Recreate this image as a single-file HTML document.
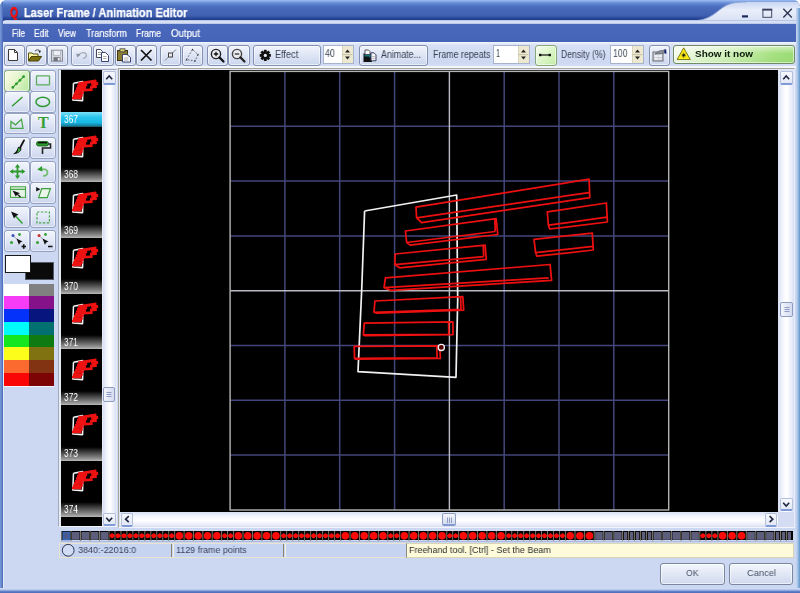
<!DOCTYPE html><html><head><meta charset="utf-8"><title>Laser Frame / Animation Editor</title><style>
*{box-sizing:border-box;margin:0;padding:0}
html,body{width:800px;height:593px;overflow:hidden;background:#fff}
body{font-family:"Liberation Sans",sans-serif;font-size:11px;color:#222;position:relative}
.abs{position:absolute}
.tx{position:absolute;white-space:nowrap;line-height:1;transform-origin:0 0;display:block;will-change:transform}
#win{position:absolute;left:0;top:0;width:800px;height:593px;background:#ccd8f1;border-radius:7px 7px 0 0;overflow:hidden}
#title{position:absolute;left:0;top:0;width:800px;height:21px;background:linear-gradient(#88aae8 0,#789cde 2px,#5d82ce 4px,#4b6dbd 7px,#4464b5 12px,#3f5eb0 16px,#2b4999 18px,#213e8e 19.6px,#2f4e9e 20.5px)}
#ttext{position:absolute;left:24px;top:3px;font-weight:bold;font-size:12.5px;color:#fff;letter-spacing:0.1px;white-space:nowrap}
#tq{position:absolute;left:9px;top:3px;font-weight:bold;font-size:13px;color:#f01010;font-family:"Liberation Mono",monospace}
#lline{position:absolute;left:3.4px;top:20.3px;width:792.4px;height:3.8px;background:linear-gradient(#a9badf,#dbe3f6 40%,#d3dcf3 75%,#a8b8e0);border-radius:3px 0 0 0}
#menu{position:absolute;left:3.4px;top:24.1px;width:792.4px;height:17.6px;background:linear-gradient(#4a69bd,#4563b7)}
#menu span{position:absolute;top:2px;color:#fff;font-size:11px;white-space:nowrap}
#lb{position:absolute;left:0;top:0;width:3.4px;height:593px;background:linear-gradient(90deg,#7999d8,#6283ca 60%,#4565b6 100%)}
#lbw{position:absolute;left:3.2px;top:42px;width:0.9px;height:546px;background:#e4eaf8}
#rb{position:absolute;left:796px;top:8px;width:4px;height:585px;background:linear-gradient(90deg,#c9d8f1,#a4c0e6 45%,#5c96c8)}
#bb{position:absolute;left:0;top:588px;width:800px;height:5px;background:linear-gradient(#dbe4f6,#a9bde6 40%,#5f80c8 70%,#4a68b8)}
#tbar{position:absolute;left:4px;top:42px;width:792px;height:27px;background:linear-gradient(#f4f7fd,#d7e0f4 3px,#cdd8f1 20px,#d4def3 23.5px,#f3f6fc 24.5px,#f3f6fc 25.8px,#cfd9f0 27px)}
.tb{position:absolute;top:44.5px;height:21px;border:1px solid #8390b0;border-radius:3px;background:linear-gradient(#f1f4fb,#dfe6f5 45%,#cbd6ee);box-shadow:inset 0 0 0 1px rgba(255,255,255,.55)}
.tb.g{background:linear-gradient(135deg,#f6fcf0,#def6cc 45%,#c2eca4);border-color:#86a878}
.tb.g2{background:linear-gradient(rgba(255,255,255,.55),rgba(255,255,255,0) 45%,rgba(120,190,90,.12)),linear-gradient(90deg,#f4fbec,#d6f2c0 40%,#a4e07e 85%,#9cdc76);border-color:#6f8c64}
.tbt{position:absolute;white-space:nowrap;font-size:11px;color:#303848}
.spin{position:absolute;top:45.3px;height:19px;background:#fff;border:1px solid #a8b4cc}
.spin i{position:absolute;right:0;top:0;width:11px;height:100%;background:#ece9d0;border-left:1px solid #d8d4bc}
.spin b{position:absolute;left:2px;top:1px;font-weight:normal;font-size:11.5px;color:#505868}
.tool{position:absolute;width:26.4px;height:21.8px;border:1px solid #95a1c0;border-radius:3px;background:linear-gradient(#f2f5fc,#e2e8f6 45%,#ccd6ee);box-shadow:inset 0 0 0 1px rgba(255,255,255,.5)}
.tool.sel{background:linear-gradient(rgba(255,255,255,.35),rgba(255,255,255,0) 50%,rgba(100,180,80,.1)),linear-gradient(90deg,#f7f9de,#e4f5c8 45%,#c2eda8);border-color:#8eb082 #6a9a62 #5c9058 #8eb082}
.sw{position:absolute}
#list{position:absolute;left:61px;top:70.3px;width:41.2px;height:455.7px;background:#000;overflow:hidden}
.lbl{position:absolute;left:0;width:41.5px;height:14.3px;color:#fff;font-size:11px;line-height:13px;padding-left:2px;background:linear-gradient(#000,#2c2c2c 25%,#8c8c8c 80%,#b8b8b8)}
.lbl.sel{background:linear-gradient(#7fe0f8,#28c4ec 35%,#18b8e4 70%,#167f9c 92%,#2a4a54)}
.vtrack{background:linear-gradient(90deg,#d9e0f4,#f4f6fd 30%,#ffffff 55%,#e9edf9 85%,#d6def3)}
.htrack{background:linear-gradient(#d9e0f4,#f4f6fd 30%,#ffffff 55%,#e9edf9 85%,#d6def3)}
.sbb{position:absolute;border:1px solid #b4bfdc;border-bottom:2px solid #7f9bd6;border-radius:2px;background:linear-gradient(#f6f8fd,#e3e8f6)}
.thumb{position:absolute;border:1px solid #8e9cc0;border-radius:2px;background:linear-gradient(90deg,#f3f5fc,#d5dcf0)}
#canvas{position:absolute;left:119.6px;top:70px;width:658.4px;height:441.5px;background:#000}
#strip{position:absolute;left:61px;top:530.5px;width:732px;height:9.7px;background:#000}
#status{position:absolute;left:59px;top:543px;width:735px;height:15px;background:#c6d3f1;border:1px solid #e9e2cc;border-right:none}
.st{position:absolute;top:543px;height:15px;font-size:11px;line-height:14px;color:#3a4258;white-space:nowrap}
.btn{position:absolute;top:562.8px;height:21.8px;border:1px solid #7c869c;border-radius:3px;background:linear-gradient(#f3f6fc,#e1e7f5 50%,#cfd8ee);font-size:11px;color:#4a5268;text-align:center;line-height:20px;box-shadow:inset 0 0 0 1px rgba(255,255,255,.6)}
</style></head><body><div id="win">
<div id="title"></div>
<svg class="abs" style="left:690px;top:0" width="110" height="25" viewBox="0 0 110 25"><defs><linearGradient id="lg1" x1="0" y1="0" x2="0" y2="1"><stop offset="0" stop-color="#c9d6f0"/><stop offset="0.35" stop-color="#e9eefa"/><stop offset="1" stop-color="#d2dcf2"/></linearGradient></defs><path d="M0 25 L0 21 C18 21 24 14 32 8 C40 2.5 46 2 56 2 L110 2 L110 25 Z" fill="url(#lg1)"/><path d="M0 21 C18 21 24 14 32 8 C40 2.5 46 2 56 2" fill="none" stroke="#8fa4d6" stroke-width="1"/><rect x="0" y="0" width="110" height="2" fill="#8fb0e6"/><rect x="52" y="15.3" width="6" height="2.2" fill="#1c2a5a"/><rect x="72.9" y="9.3" width="8.8" height="8" fill="none" stroke="#39425f" stroke-width="0.95"/><rect x="72.4" y="8.8" width="9.8" height="1.8" fill="#39425f"/><path d="M93.3 8.8 L101.8 17.5 M101.8 8.8 L93.3 17.5" stroke="#2c3555" stroke-width="1.35" fill="none"/></svg>
<span class="tx" style="left:24.00px;top:6.68px;font-size:12.43px;color:#fff;font-weight:bold;transform:scaleX(0.8888);-webkit-text-stroke:0.25px #fff;">Laser Frame / Animation Editor</span>
<span class="tx" style="left:9.6px;top:5.3px;font-size:14px;font-weight:bold;color:#f41414;transform:scaleX(0.72);-webkit-text-stroke:0.5px #f41414;text-shadow:0.6px 0.8px 0 #7a1030">Q</span>
<div id="lline"></div>
<div id="menu">
</div>
<span class="tx" style="left:12.00px;top:28.97px;font-size:10.20px;color:#fff;transform:scaleX(0.7913);-webkit-text-stroke:0.2px #fff;">File</span>
<span class="tx" style="left:34.00px;top:28.97px;font-size:10.20px;color:#fff;transform:scaleX(0.8253);-webkit-text-stroke:0.2px #fff;">Edit</span>
<span class="tx" style="left:58.00px;top:28.97px;font-size:10.20px;color:#fff;transform:scaleX(0.8213);-webkit-text-stroke:0.2px #fff;">View</span>
<span class="tx" style="left:85.50px;top:28.97px;font-size:10.20px;color:#fff;transform:scaleX(0.8898);-webkit-text-stroke:0.2px #fff;">Transform</span>
<span class="tx" style="left:136.00px;top:28.97px;font-size:10.20px;color:#fff;transform:scaleX(0.8487);-webkit-text-stroke:0.2px #fff;">Frame</span>
<span class="tx" style="left:170.50px;top:28.97px;font-size:10.20px;color:#fff;transform:scaleX(0.9475);-webkit-text-stroke:0.2px #fff;">Output</span>
<div id="tbar"></div>
<div class="tb " style="left:4.3px;width:21.2px"><svg class="abs" style="left:0;top:0;left:-1.2px;top:-0.8px" width="20" height="20" viewBox="0 0 20 20"><path d="M4.5 4.5 H10.5 L13.5 7.5 V15.5 H4.5 Z" fill="#fff" stroke="#3c3c34" stroke-width="1"/><path d="M10.5 4.5 V7.5 H13.5" fill="none" stroke="#3c3c34" stroke-width="1"/></svg></div>
<div class="tb " style="left:25.5px;width:21.2px"><svg class="abs" style="left:0;top:0;left:-1.2px;top:-0.8px" width="20" height="20" viewBox="0 0 20 20"><path d="M3.5 16 V8 H7 L8 9 H13 V11.5 H6.5 Z" fill="#f8f2a4" stroke="#5c5410" stroke-width="1"/><path d="M3.5 16 L6.3 11.5 H16.6 L13.4 16 Z" fill="#7a7010" stroke="#4a4408" stroke-width="1"/><path d="M10 6.2 C11.5 4.3 13.6 4.5 14.6 6" fill="none" stroke="#444" stroke-width="1"/><path d="M13.2 5.6 L16 5.8 L14.8 8.2 Z" fill="#222"/></svg></div>
<div class="tb " style="left:46.8px;width:21.2px"><svg class="abs" style="left:0;top:0;left:-1.2px;top:-0.8px" width="20" height="20" viewBox="0 0 20 20"><rect x="4.5" y="5.2" width="11" height="11" fill="#d4d7de" stroke="#8a8e98" stroke-width="1"/><rect x="6.5" y="5.7" width="7" height="4.5" fill="#eef0f5" stroke="#9a9ea8" stroke-width=".6"/><rect x="6.5" y="12.2" width="7" height="4" fill="#70747e"/><rect x="10.8" y="13" width="2" height="2.6" fill="#e4e6ec"/></svg></div>
<div class="tb " style="left:71.3px;width:21.2px"><svg class="abs" style="left:0;top:0;left:-1.2px;top:-0.8px" width="20" height="20" viewBox="0 0 20 20"><path d="M7.6 10.6 C8.6 7.4 14 6.6 15.3 9.4 C16.1 11.6 14.2 13.3 12 13.4" fill="none" stroke="#a0a4b0" stroke-width="1.2"/><path d="M5.2 8.6 L9.4 9.4 L6.4 12.6 Z" fill="#8c909c"/></svg></div>
<div class="tb " style="left:93px;width:21.2px"><svg class="abs" style="left:0;top:0;left:-1.2px;top:-0.8px" width="20" height="20" viewBox="0 0 20 20"><path d="M3.5 4.5 H7.5 L9.5 6.5 V12.5 H3.5 Z" fill="#fff" stroke="#444a5c" stroke-width="1"/><path d="M5 7.5H8M5 9.5H8" stroke="#888" stroke-width=".8"/><path d="M8.5 7.5 H12.5 L15.5 10.5 V16.5 H8.5 Z" fill="#fff" stroke="#3a4470" stroke-width="1"/><path d="M10 11.5H13.5M10 13.5H13.5" stroke="#999" stroke-width=".8"/></svg></div>
<div class="tb " style="left:114.6px;width:21.2px"><svg class="abs" style="left:0;top:0;left:-1.2px;top:-0.8px" width="20" height="20" viewBox="0 0 20 20"><rect x="3.5" y="5.5" width="10" height="10" fill="#8a7c30" stroke="#3c3810" stroke-width="1"/><rect x="6" y="3.8" width="5" height="3" fill="#d8d070" stroke="#444" stroke-width=".8"/><path d="M8.5 9.5 H13 L16.5 12.5 V17 H8.5 Z" fill="#fff" stroke="#3a4470" stroke-width="1"/><path d="M10 13H14.5M10 15H14.5" stroke="#999" stroke-width=".8"/></svg></div>
<div class="tb " style="left:136.3px;width:21.2px"><svg class="abs" style="left:0;top:0;left:-1.2px;top:-0.8px" width="20" height="20" viewBox="0 0 20 20"><path d="M5 5 L15.5 15.5 M15.5 5 L5 15.5" stroke="#111" stroke-width="1.7" fill="none"/></svg></div>
<div class="tb " style="left:160.3px;width:21.2px"><svg class="abs" style="left:0;top:0;left:-1.2px;top:-0.8px" width="20" height="20" viewBox="0 0 20 20"><path d="M5 15.5 L16 4.5" stroke="#7a7e88" stroke-width="1" fill="none"/><rect x="8.5" y="8" width="4" height="4" fill="#e8e8e8" stroke="#444" stroke-width="1"/></svg></div>
<div class="tb " style="left:182px;width:21.2px"><svg class="abs" style="left:0;top:0;left:-1.2px;top:-0.8px" width="20" height="20" viewBox="0 0 20 20"><path d="M4.5 14.5 L10.5 4.5 L16 9.5 L13 16 Z" fill="none" stroke="#555" stroke-width=".9" stroke-dasharray="1.6 1.6"/><path d="M10.5 3.5l1 1.8h-2zM3.5 15.5l1-1.8 1 1.8zM16 8.5l1 1.8h-2zM12 16.5l1-1.8 1 1.8z" fill="#333"/></svg></div>
<div class="tb " style="left:206.8px;width:21.2px"><svg class="abs" style="left:0;top:0;left:-1.2px;top:-0.8px" width="20" height="20" viewBox="0 0 20 20"><circle cx="9" cy="9" r="4.6" fill="#eef0f6" stroke="#222" stroke-width="1.4"/><path d="M6.8 9H11.2M9 6.8V11.2" stroke="#111" stroke-width="1.3"/><path d="M12.4 12.4 L16.5 16.5" stroke="#111" stroke-width="2.2" stroke-linecap="round"/></svg></div>
<div class="tb " style="left:228.4px;width:21.2px"><svg class="abs" style="left:0;top:0;left:-1.2px;top:-0.8px" width="20" height="20" viewBox="0 0 20 20"><circle cx="9" cy="9" r="4.6" fill="#e8eaf0" stroke="#444" stroke-width="1.4"/><path d="M6.8 9H11.2" stroke="#333" stroke-width="1.3"/><path d="M12.4 12.4 L16.5 16.5" stroke="#222" stroke-width="2.2" stroke-linecap="round"/></svg></div>
<div class="tb " style="left:253px;width:67.5px"><svg class="abs" style="left:0;top:0;left:2px;top:0" width="22" height="20" viewBox="0 0 22 20"><g transform="translate(9.3,9.4)"><circle r="3.9" fill="#111"/><rect x="-1.4" y="-5.6" width="2.8" height="3" fill="#111" transform="rotate(0)"/><rect x="-1.4" y="-5.6" width="2.8" height="3" fill="#111" transform="rotate(45)"/><rect x="-1.4" y="-5.6" width="2.8" height="3" fill="#111" transform="rotate(90)"/><rect x="-1.4" y="-5.6" width="2.8" height="3" fill="#111" transform="rotate(135)"/><rect x="-1.4" y="-5.6" width="2.8" height="3" fill="#111" transform="rotate(180)"/><rect x="-1.4" y="-5.6" width="2.8" height="3" fill="#111" transform="rotate(225)"/><rect x="-1.4" y="-5.6" width="2.8" height="3" fill="#111" transform="rotate(270)"/><rect x="-1.4" y="-5.6" width="2.8" height="3" fill="#111" transform="rotate(315)"/><circle r="1.6" fill="#e4e9f6"/></g></svg></div>
<span class="tx" style="left:274.80px;top:50.39px;font-size:10.06px;color:#3a4258;transform:scaleX(0.9088);">Effect</span>
<span class="tx" style="left:325.00px;top:49.13px;font-size:10.47px;color:#3e4658;transform:scaleX(0.8411);z-index:3;">40</span>
<div class="spin" style="left:322.8px;width:31.4px"><i></i><svg class="abs" style="right:0;top:0" width="11" height="17" viewBox="0 0 11 17"><path d="M3 6.6 L5.5 3.6 L8 6.6Z M3 10.6 L5.5 13.6 L8 10.6Z" fill="#222"/><path d="M0.5 8.6H10.5" stroke="#c4c0a4" stroke-width="1"/></svg></div>
<div class="tb " style="left:359.2px;width:68.5px"><svg class="abs" style="left:0;top:0;left:0.8px;top:-0.2px" width="20" height="20" viewBox="0 0 20 20"><rect x="3" y="9" width="7.5" height="7.5" fill="#0e7a80" stroke="#111" stroke-width="1"/><path d="M3 11.5 H8 V16.5 H3Z" fill="#111"/><path d="M3 16.5 L10.5 11 V16.5Z" fill="#111"/><path d="M4 5 H7.5 L9 6.5 V9.5 H4Z" fill="#fff" stroke="#444" stroke-width=".9"/><path d="M10 7.8 H13 L15 9.8 V15.8 H10Z" fill="#f4f4f8" stroke="#3a4060" stroke-width="1"/><path d="M11.3 11.5H13.8M11.3 13.5H13.8" stroke="#aaa" stroke-width=".8"/></svg></div>
<span class="tx" style="left:380.50px;top:50.09px;font-size:10.06px;color:#3a4258;transform:scaleX(0.8836);">Animate...</span>
<span class="tx" style="left:433.00px;top:49.79px;font-size:10.06px;color:#3a4258;transform:scaleX(0.8793);">Frame repeats</span>
<span class="tx" style="left:495.80px;top:49.13px;font-size:10.47px;color:#3e4658;transform:scaleX(0.6866);z-index:3;">1</span>
<div class="spin" style="left:493px;width:37px"><i></i><svg class="abs" style="right:0;top:0" width="11" height="17" viewBox="0 0 11 17"><path d="M3 6.6 L5.5 3.6 L8 6.6Z M3 10.6 L5.5 13.6 L8 10.6Z" fill="#222"/><path d="M0.5 8.6H10.5" stroke="#c4c0a4" stroke-width="1"/></svg></div>
<div class="tb g" style="left:535.2px;width:21.4px"><svg class="abs" style="left:0;top:0;left:-1px;top:-1px" width="20" height="20" viewBox="0 0 20 20"><path d="M5 10H15" stroke="#111" stroke-width="1.2"/><rect x="4" y="8.8" width="2.4" height="2.4" fill="#111"/><rect x="13.6" y="8.8" width="2.4" height="2.4" fill="#111"/></svg></div>
<span class="tx" style="left:561.00px;top:49.79px;font-size:10.06px;color:#3a4258;transform:scaleX(0.8564);">Density (%)</span>
<span class="tx" style="left:612.50px;top:49.13px;font-size:10.47px;color:#3e4658;transform:scaleX(0.8296);z-index:3;">100</span>
<div class="spin" style="left:610px;width:34px"><i></i><svg class="abs" style="right:0;top:0" width="11" height="17" viewBox="0 0 11 17"><path d="M3 6.6 L5.5 3.6 L8 6.6Z M3 10.6 L5.5 13.6 L8 10.6Z" fill="#222"/><path d="M0.5 8.6H10.5" stroke="#c4c0a4" stroke-width="1"/></svg></div>
<div class="tb " style="left:649.2px;width:21px"><svg class="abs" style="left:0;top:0;left:-1.6px;top:-1.3px" width="20" height="20" viewBox="0 0 20 20"><rect x="4" y="8" width="10" height="9" fill="#c9ccd4" stroke="#6c7078" stroke-width="1"/><rect x="5.6" y="11" width="3" height="2" fill="#f2f3f6"/><rect x="9.4" y="11" width="3.4" height="2" fill="#f2f3f6"/><rect x="5.6" y="14" width="3" height="1.8" fill="#f2f3f6"/><rect x="9.4" y="14" width="3.4" height="1.8" fill="#e4e6ea"/><path d="M6 10 L10 7 L15 6.2 L15.5 9 L11 9.6 Z" fill="#8c9098" stroke="#5a5e68" stroke-width=".7"/><path d="M15.2 5.2 L17.2 5.6 L17.4 9.8 L15.6 9.4 Z" fill="#141c6c"/></svg></div>
<div class="tb g2" style="left:672.5px;width:122.5px;top:44.5px;height:19.5px"><svg class="abs" style="left:2.6px;top:0.4px" width="15.4" height="15.4" viewBox="0 0 22 22" preserveAspectRatio="none"><path d="M11 2.6 L20.4 19.3 H1.6 Z" fill="#fbee10" stroke="#6a6210" stroke-width="1.2" stroke-linejoin="round"/><g stroke="#222" stroke-width="0.9"><path d="M11 9.5V17M7.8 13.2H14.2M8.8 11L13.2 15.4M13.2 11L8.8 15.4"/></g><circle cx="11" cy="13.2" r="1.5" fill="#111"/></svg></div>
<span class="tx" style="left:694.50px;top:49.21px;font-size:9.92px;color:#0c1a0c;font-weight:bold;transform:scaleX(1.0028);">Show it now</span>
<div class="tool sel" style="left:4.3px;top:70.1px;width:26.0px"><svg class="abs" style="left:0;top:0;left:-0.6px;top:-0.6px" width="25" height="21" viewBox="0 0 25 21"><path d="M7.8 16.4 L18.6 5.7" stroke="#2c9a2c" stroke-width="1.1"/><circle cx="7.8" cy="16.4" r="1.35" fill="#2c9a2c"/><circle cx="11.364" cy="12.868999999999998" r="1.35" fill="#2c9a2c"/><circle cx="14.928" cy="9.337999999999997" r="1.35" fill="#2c9a2c"/><circle cx="18.6" cy="5.699999999999999" r="1.35" fill="#2c9a2c"/></svg></div>
<div class="tool" style="left:30.1px;top:70.1px;width:25.6px"><svg class="abs" style="left:0;top:0;left:-0.6px;top:-0.6px" width="25" height="21" viewBox="0 0 25 21"><rect x="5.5" y="4.9" width="13" height="9" rx="0.4" fill="none" stroke="#5cae5c" stroke-width="1.3"/></svg></div>
<div class="tool" style="left:4.3px;top:91.3px;width:26.0px"><svg class="abs" style="left:0;top:0;left:-0.6px;top:-0.6px" width="25" height="21" viewBox="0 0 25 21"><path d="M7 14.2 L17.5 5" stroke="#2c9a2c" stroke-width="1.4"/></svg></div>
<div class="tool" style="left:30.1px;top:91.3px;width:25.6px"><svg class="abs" style="left:0;top:0;left:-0.6px;top:-0.6px" width="25" height="21" viewBox="0 0 25 21"> <ellipse cx="11.8" cy="9.9" rx="6.8" ry="4.7" fill="none" stroke="#2c9a2c" stroke-width="1.5"/></svg></div>
<div class="tool" style="left:4.3px;top:112.6px;width:26.0px"><svg class="abs" style="left:0;top:0;left:-0.6px;top:-0.6px" width="25" height="21" viewBox="0 0 25 21"><path d="M5.8 15.3 L6 8.5 L10.5 11.8 L16.5 6.2 L18 15.3 Z" fill="none" stroke="#4aa84a" stroke-width="1.3"/></svg></div>
<div class="tool" style="left:30.1px;top:112.6px;width:25.6px"><svg class="abs" style="left:0;top:0;left:-0.6px;top:-0.6px" width="25" height="21" viewBox="0 0 25 21"><text x="12.3" y="15" text-anchor="middle" font-family="Liberation Serif,serif" font-weight="bold" font-size="16" fill="#38a038">T</text></svg></div>
<div class="tool" style="left:4.3px;top:136.9px;width:26.0px"><svg class="abs" style="left:0;top:0;left:-0.6px;top:-0.6px" width="25" height="21" viewBox="0 0 25 21"><path d="M19 3.4 L14.6 11.6" stroke="#111" stroke-width="1.9" stroke-linecap="round"/><path d="M13.2 9.8 L16.6 11.8 C15.4 15 12.4 17.3 8 17.2 C10.6 15.6 12.2 13.2 13.2 9.8 Z" fill="#111"/><path d="M13.5 10.8 L15.6 12 C15 13.8 13.8 15.2 12 16.1 C12.8 14.6 13.3 12.8 13.5 10.8 Z" fill="#38b038"/></svg></div>
<div class="tool" style="left:30.1px;top:136.9px;width:25.6px"><svg class="abs" style="left:0;top:0;left:-0.6px;top:-0.6px" width="25" height="21" viewBox="0 0 25 21"><rect x="5.5" y="4.5" width="12" height="4.5" rx="2" fill="#2c9a2c" stroke="#155a15" stroke-width=".8"/><rect x="7" y="5" width="9" height="1.4" fill="#111"/><path d="M17.5 7 H19.5 V11 H11.5 V17" fill="none" stroke="#222" stroke-width="1.6"/></svg></div>
<div class="tool" style="left:4.3px;top:160.79999999999998px;width:26.0px"><svg class="abs" style="left:0;top:0;left:-0.6px;top:-0.6px" width="25" height="21" viewBox="0 0 25 21"><path d="M12.5 3 L15.1 6.6 H13.4 V9.6 H16.8 V7.9 L20.4 10.5 L16.8 13.1 V11.4 H13.4 V14.4 H15.1 L12.5 18 L9.9 14.4 H11.6 V11.4 H8.2 V13.1 L4.6 10.5 L8.2 7.9 V9.6 H11.6 V6.6 H9.9 Z" fill="#2c9a2c"/></svg></div>
<div class="tool" style="left:30.1px;top:160.79999999999998px;width:25.6px"><svg class="abs" style="left:0;top:0;left:-0.6px;top:-0.6px" width="25" height="21" viewBox="0 0 25 21"><path d="M10 9 C13.5 7 17.2 9.2 16.4 12.2 C15.8 14.4 13.6 15 12 14.8" fill="none" stroke="#74be74" stroke-width="1.7"/><path d="M6.2 8.4 L11 5 L11.4 10.4 Z" fill="#2c9a2c"/></svg></div>
<div class="tool" style="left:4.3px;top:182.0px;width:26.0px"><svg class="abs" style="left:0;top:0;left:-0.6px;top:-0.6px" width="25" height="21" viewBox="0 0 25 21"><rect x="5.5" y="4.8" width="15" height="10.6" fill="#e6f2e6" stroke="#4aa84a" stroke-width="1.1"/><path d="M5.5 7.4 H20.5" stroke="#4aa84a" stroke-width="1.1"/><path d="M7.5 8.6 L15.2 11.2 L12.8 12 L16 14.6 L15 15.4 L12 12.8 L10.8 14.6Z" fill="#111"/></svg></div>
<div class="tool" style="left:30.1px;top:182.0px;width:25.6px"><svg class="abs" style="left:0;top:0;left:-0.6px;top:-0.6px" width="25" height="21" viewBox="0 0 25 21"><path d="M10.8 6.6 H19.4 L16.2 15.6 H7.6 Z" fill="#eaf6ea" stroke="#3ea03e" stroke-width="1.2"/><path d="M5.2 5 L9.4 7.3 L5.2 9.6Z" fill="#111"/></svg></div>
<div class="tool" style="left:4.3px;top:206.1px;width:26.0px"><svg class="abs" style="left:0;top:0;left:-0.6px;top:-0.6px" width="25" height="21" viewBox="0 0 25 21"><path d="M17.5 16.5 L10 8.5" stroke="#2c9a2c" stroke-width="1.4"/><path d="M6 4.5 L13.5 7.5 L11 9 L9 11.5 Z" fill="#111"/></svg></div>
<div class="tool" style="left:30.1px;top:206.1px;width:25.6px"><svg class="abs" style="left:0;top:0;left:-0.6px;top:-0.6px" width="25" height="21" viewBox="0 0 25 21"><rect x="6" y="5" width="12.4" height="10.8" fill="none" stroke="#48a648" stroke-width="1.15" stroke-dasharray="2.4 1.5"/></svg></div>
<div class="tool" style="left:4.3px;top:229.9px;width:26.0px"><svg class="abs" style="left:0;top:0;left:-0.6px;top:-0.6px" width="25" height="21" viewBox="0 0 25 21"><circle cx="8" cy="5.5" r="1.5" fill="#3a50c0"/><circle cx="14.5" cy="4.5" r="1.4" fill="#38a038"/><circle cx="6.5" cy="12.5" r="1.5" fill="#38a038"/><path d="M8.5 6 L16 13" stroke="#444" stroke-width=".8" stroke-dasharray="1.5 1.2"/><path d="M11.5 8.5 L17.5 11.5 L15 12.5 L14 15 Z" fill="#111"/><path d="M16.5 16.5H21M18.75 14.2V18.8" stroke="#111" stroke-width="1.6"/></svg></div>
<div class="tool" style="left:30.1px;top:229.9px;width:25.6px"><svg class="abs" style="left:0;top:0;left:-0.6px;top:-0.6px" width="25" height="21" viewBox="0 0 25 21"><circle cx="8" cy="5.5" r="1.5" fill="#d03030"/><circle cx="14.5" cy="4.5" r="1.4" fill="#38a038"/><circle cx="6.5" cy="12.5" r="1.5" fill="#38a038"/><path d="M8.5 6 L16 13" stroke="#444" stroke-width=".8" stroke-dasharray="1.5 1.2"/><path d="M11.5 8.5 L17.5 11.5 L15 12.5 L14 15 Z" fill="#111"/><path d="M17 16.5H21.5" stroke="#111" stroke-width="1.6"/></svg></div>
<div class="sw" style="left:25px;top:262px;width:28.5px;height:17.5px;background:#0a0a0a;border:1px solid #555a68"></div>
<div class="sw" style="left:5px;top:255px;width:26px;height:17.5px;background:#fff;border:1.5px solid #1a1a1a"></div>
<div class="sw" style="left:4px;top:283.50px;width:24.9px;height:13.09px;background:#ffffff"></div>
<div class="sw" style="left:28.9px;top:283.50px;width:24.7px;height:13.09px;background:#808080"></div>
<div class="sw" style="left:4px;top:296.29px;width:24.9px;height:13.09px;background:#f63cf6"></div>
<div class="sw" style="left:28.9px;top:296.29px;width:24.7px;height:13.09px;background:#86128a"></div>
<div class="sw" style="left:4px;top:309.08px;width:24.9px;height:13.09px;background:#0432fa"></div>
<div class="sw" style="left:28.9px;top:309.08px;width:24.7px;height:13.09px;background:#06167e"></div>
<div class="sw" style="left:4px;top:321.87px;width:24.9px;height:13.09px;background:#00fbfb"></div>
<div class="sw" style="left:28.9px;top:321.87px;width:24.7px;height:13.09px;background:#027070"></div>
<div class="sw" style="left:4px;top:334.66px;width:24.9px;height:13.09px;background:#14e620"></div>
<div class="sw" style="left:28.9px;top:334.66px;width:24.7px;height:13.09px;background:#0f7a12"></div>
<div class="sw" style="left:4px;top:347.45px;width:24.9px;height:13.09px;background:#fdfd1c"></div>
<div class="sw" style="left:28.9px;top:347.45px;width:24.7px;height:13.09px;background:#807210"></div>
<div class="sw" style="left:4px;top:360.24px;width:24.9px;height:13.09px;background:#fd6a30"></div>
<div class="sw" style="left:28.9px;top:360.24px;width:24.7px;height:13.09px;background:#823412"></div>
<div class="sw" style="left:4px;top:373.03px;width:24.9px;height:13.09px;background:#fa0606"></div>
<div class="sw" style="left:28.9px;top:373.03px;width:24.7px;height:13.09px;background:#7c0404"></div>
<div class="sw" style="left:3.4px;top:385.82px;width:50.6px;height:1.4px;background:#f2f5fc"></div>
<div class="abs" style="left:58.3px;top:68.5px;width:58.6px;height:458.8px;border:1.4px solid #a2aabc;border-right-color:#e9edf7;border-bottom-color:#f3f5fb;background:#e6eaf5"></div>
<div class="abs" style="left:117.8px;top:68.4px;width:677px;height:459.6px;border:1.3px solid #a9a79a;border-right-color:#e9edf7;border-bottom-color:#f3f5fb;background:#dfe5f4"></div>
<div id="list">
<svg class="abs" style="left:0;top:0.00px" width="41.5" height="42" viewBox="0 0 41.5 42"><g transform="translate(-23.96,-8.64) scale(0.1,0.104)" fill="none" stroke-linejoin="round"><path d="M364.2 211.0 L456.3 195.0 L457.3 300.0 L455.6 377.3 L357.6 371.6 L361.3 290.0 L364.2 211.0" stroke="#f4f4f4" stroke-width="15"/><path d="M415.6 207.2 L588.7 179.2 L589.4 197.7 L421.2 222.7 L416.2 217.8 Z M416.2 217.8 L588.3 192.6 M546.9 211.9 L606.0 203.0 L607.0 222.0 L549.4 229.0 L548.0 225.2 Z M548.0 225.2 L606.5 217.2 M533.6 239.3 L591.9 233.1 L592.9 250.0 L536.6 256.2 L535.2 252.6 Z M535.2 252.6 L592.4 246.4 M405.0 231.0 L495.7 218.6 L497.4 234.5 L409.8 245.1 L406.3 242.5 Z M406.3 242.5 L494.8 231.5 M494.5 218.9 L494.8 231.5 M394.8 254.0 L484.7 245.1 L485.9 259.3 L399.2 267.8 L394.4 264.6 Z M394.4 264.6 L483.3 256.6 M482.8 245.4 L483.3 256.6 M385.0 277.9 L549.7 264.5 L551.2 280.4 L390.4 290.4 L383.7 287.7 Z M383.7 287.7 L548.3 277.8 M374.5 301.0 L462.4 296.7 L463.3 310.2 L376.0 313.2 L373.6 312.3 Z M373.6 312.3 L460.6 309.4 M460.2 297.0 L460.6 309.4 M363.9 323.1 L452.5 321.9 L452.6 334.7 L364.5 335.6 L363.0 335.0 Z M363.0 335.0 L448.4 334.3 M448.2 322.2 L448.4 334.3 M353.8 346.3 L439.3 346.0 L440.0 358.5 L355.0 359.2 L354.2 358.5 Z M354.2 358.5 L436.7 358.0 M436.4 346.3 L436.7 358.0" stroke="#f01212" stroke-width="10.5" fill="#f01212"/></g></svg>
<div class="lbl sel" style="top:42.10px"></div>
<span class="tx" style="left:2.70px;top:44.45px;font-size:10.34px;color:#fff;transform:scaleX(0.8061);">367</span>
<svg class="abs" style="left:0;top:55.70px" width="41.5" height="42" viewBox="0 0 41.5 42"><g transform="translate(-23.96,-8.64) scale(0.1,0.104)" fill="none" stroke-linejoin="round"><path d="M364.2 211.0 L456.3 195.0 L457.3 300.0 L455.6 377.3 L357.6 371.6 L361.3 290.0 L364.2 211.0" stroke="#f4f4f4" stroke-width="15"/><path d="M415.6 207.2 L588.7 179.2 L589.4 197.7 L421.2 222.7 L416.2 217.8 Z M416.2 217.8 L588.3 192.6 M546.9 211.9 L606.0 203.0 L607.0 222.0 L549.4 229.0 L548.0 225.2 Z M548.0 225.2 L606.5 217.2 M533.6 239.3 L591.9 233.1 L592.9 250.0 L536.6 256.2 L535.2 252.6 Z M535.2 252.6 L592.4 246.4 M405.0 231.0 L495.7 218.6 L497.4 234.5 L409.8 245.1 L406.3 242.5 Z M406.3 242.5 L494.8 231.5 M494.5 218.9 L494.8 231.5 M394.8 254.0 L484.7 245.1 L485.9 259.3 L399.2 267.8 L394.4 264.6 Z M394.4 264.6 L483.3 256.6 M482.8 245.4 L483.3 256.6 M385.0 277.9 L549.7 264.5 L551.2 280.4 L390.4 290.4 L383.7 287.7 Z M383.7 287.7 L548.3 277.8 M374.5 301.0 L462.4 296.7 L463.3 310.2 L376.0 313.2 L373.6 312.3 Z M373.6 312.3 L460.6 309.4 M460.2 297.0 L460.6 309.4 M363.9 323.1 L452.5 321.9 L452.6 334.7 L364.5 335.6 L363.0 335.0 Z M363.0 335.0 L448.4 334.3 M448.2 322.2 L448.4 334.3 M353.8 346.3 L439.3 346.0 L440.0 358.5 L355.0 359.2 L354.2 358.5 Z M354.2 358.5 L436.7 358.0 M436.4 346.3 L436.7 358.0" stroke="#f01212" stroke-width="10.5" fill="#f01212"/></g></svg>
<div class="lbl" style="top:97.80px"></div>
<span class="tx" style="left:2.70px;top:100.15px;font-size:10.34px;color:#fff;transform:scaleX(0.8061);">368</span>
<svg class="abs" style="left:0;top:111.40px" width="41.5" height="42" viewBox="0 0 41.5 42"><g transform="translate(-23.96,-8.64) scale(0.1,0.104)" fill="none" stroke-linejoin="round"><path d="M364.2 211.0 L456.3 195.0 L457.3 300.0 L455.6 377.3 L357.6 371.6 L361.3 290.0 L364.2 211.0" stroke="#f4f4f4" stroke-width="15"/><path d="M415.6 207.2 L588.7 179.2 L589.4 197.7 L421.2 222.7 L416.2 217.8 Z M416.2 217.8 L588.3 192.6 M546.9 211.9 L606.0 203.0 L607.0 222.0 L549.4 229.0 L548.0 225.2 Z M548.0 225.2 L606.5 217.2 M533.6 239.3 L591.9 233.1 L592.9 250.0 L536.6 256.2 L535.2 252.6 Z M535.2 252.6 L592.4 246.4 M405.0 231.0 L495.7 218.6 L497.4 234.5 L409.8 245.1 L406.3 242.5 Z M406.3 242.5 L494.8 231.5 M494.5 218.9 L494.8 231.5 M394.8 254.0 L484.7 245.1 L485.9 259.3 L399.2 267.8 L394.4 264.6 Z M394.4 264.6 L483.3 256.6 M482.8 245.4 L483.3 256.6 M385.0 277.9 L549.7 264.5 L551.2 280.4 L390.4 290.4 L383.7 287.7 Z M383.7 287.7 L548.3 277.8 M374.5 301.0 L462.4 296.7 L463.3 310.2 L376.0 313.2 L373.6 312.3 Z M373.6 312.3 L460.6 309.4 M460.2 297.0 L460.6 309.4 M363.9 323.1 L452.5 321.9 L452.6 334.7 L364.5 335.6 L363.0 335.0 Z M363.0 335.0 L448.4 334.3 M448.2 322.2 L448.4 334.3 M353.8 346.3 L439.3 346.0 L440.0 358.5 L355.0 359.2 L354.2 358.5 Z M354.2 358.5 L436.7 358.0 M436.4 346.3 L436.7 358.0" stroke="#f01212" stroke-width="10.5" fill="#f01212"/></g></svg>
<div class="lbl" style="top:153.50px"></div>
<span class="tx" style="left:2.70px;top:155.85px;font-size:10.34px;color:#fff;transform:scaleX(0.8061);">369</span>
<svg class="abs" style="left:0;top:167.10px" width="41.5" height="42" viewBox="0 0 41.5 42"><g transform="translate(-23.96,-8.64) scale(0.1,0.104)" fill="none" stroke-linejoin="round"><path d="M364.2 211.0 L456.3 195.0 L457.3 300.0 L455.6 377.3 L357.6 371.6 L361.3 290.0 L364.2 211.0" stroke="#f4f4f4" stroke-width="15"/><path d="M415.6 207.2 L588.7 179.2 L589.4 197.7 L421.2 222.7 L416.2 217.8 Z M416.2 217.8 L588.3 192.6 M546.9 211.9 L606.0 203.0 L607.0 222.0 L549.4 229.0 L548.0 225.2 Z M548.0 225.2 L606.5 217.2 M533.6 239.3 L591.9 233.1 L592.9 250.0 L536.6 256.2 L535.2 252.6 Z M535.2 252.6 L592.4 246.4 M405.0 231.0 L495.7 218.6 L497.4 234.5 L409.8 245.1 L406.3 242.5 Z M406.3 242.5 L494.8 231.5 M494.5 218.9 L494.8 231.5 M394.8 254.0 L484.7 245.1 L485.9 259.3 L399.2 267.8 L394.4 264.6 Z M394.4 264.6 L483.3 256.6 M482.8 245.4 L483.3 256.6 M385.0 277.9 L549.7 264.5 L551.2 280.4 L390.4 290.4 L383.7 287.7 Z M383.7 287.7 L548.3 277.8 M374.5 301.0 L462.4 296.7 L463.3 310.2 L376.0 313.2 L373.6 312.3 Z M373.6 312.3 L460.6 309.4 M460.2 297.0 L460.6 309.4 M363.9 323.1 L452.5 321.9 L452.6 334.7 L364.5 335.6 L363.0 335.0 Z M363.0 335.0 L448.4 334.3 M448.2 322.2 L448.4 334.3 M353.8 346.3 L439.3 346.0 L440.0 358.5 L355.0 359.2 L354.2 358.5 Z M354.2 358.5 L436.7 358.0 M436.4 346.3 L436.7 358.0" stroke="#f01212" stroke-width="10.5" fill="#f01212"/></g></svg>
<div class="lbl" style="top:209.20px"></div>
<span class="tx" style="left:2.70px;top:211.55px;font-size:10.34px;color:#fff;transform:scaleX(0.8061);">370</span>
<svg class="abs" style="left:0;top:222.80px" width="41.5" height="42" viewBox="0 0 41.5 42"><g transform="translate(-23.96,-8.64) scale(0.1,0.104)" fill="none" stroke-linejoin="round"><path d="M364.2 211.0 L456.3 195.0 L457.3 300.0 L455.6 377.3 L357.6 371.6 L361.3 290.0 L364.2 211.0" stroke="#f4f4f4" stroke-width="15"/><path d="M415.6 207.2 L588.7 179.2 L589.4 197.7 L421.2 222.7 L416.2 217.8 Z M416.2 217.8 L588.3 192.6 M546.9 211.9 L606.0 203.0 L607.0 222.0 L549.4 229.0 L548.0 225.2 Z M548.0 225.2 L606.5 217.2 M533.6 239.3 L591.9 233.1 L592.9 250.0 L536.6 256.2 L535.2 252.6 Z M535.2 252.6 L592.4 246.4 M405.0 231.0 L495.7 218.6 L497.4 234.5 L409.8 245.1 L406.3 242.5 Z M406.3 242.5 L494.8 231.5 M494.5 218.9 L494.8 231.5 M394.8 254.0 L484.7 245.1 L485.9 259.3 L399.2 267.8 L394.4 264.6 Z M394.4 264.6 L483.3 256.6 M482.8 245.4 L483.3 256.6 M385.0 277.9 L549.7 264.5 L551.2 280.4 L390.4 290.4 L383.7 287.7 Z M383.7 287.7 L548.3 277.8 M374.5 301.0 L462.4 296.7 L463.3 310.2 L376.0 313.2 L373.6 312.3 Z M373.6 312.3 L460.6 309.4 M460.2 297.0 L460.6 309.4 M363.9 323.1 L452.5 321.9 L452.6 334.7 L364.5 335.6 L363.0 335.0 Z M363.0 335.0 L448.4 334.3 M448.2 322.2 L448.4 334.3 M353.8 346.3 L439.3 346.0 L440.0 358.5 L355.0 359.2 L354.2 358.5 Z M354.2 358.5 L436.7 358.0 M436.4 346.3 L436.7 358.0" stroke="#f01212" stroke-width="10.5" fill="#f01212"/></g></svg>
<div class="lbl" style="top:264.90px"></div>
<span class="tx" style="left:2.70px;top:267.25px;font-size:10.34px;color:#fff;transform:scaleX(0.8061);">371</span>
<svg class="abs" style="left:0;top:278.50px" width="41.5" height="42" viewBox="0 0 41.5 42"><g transform="translate(-23.96,-8.64) scale(0.1,0.104)" fill="none" stroke-linejoin="round"><path d="M364.2 211.0 L456.3 195.0 L457.3 300.0 L455.6 377.3 L357.6 371.6 L361.3 290.0 L364.2 211.0" stroke="#f4f4f4" stroke-width="15"/><path d="M415.6 207.2 L588.7 179.2 L589.4 197.7 L421.2 222.7 L416.2 217.8 Z M416.2 217.8 L588.3 192.6 M546.9 211.9 L606.0 203.0 L607.0 222.0 L549.4 229.0 L548.0 225.2 Z M548.0 225.2 L606.5 217.2 M533.6 239.3 L591.9 233.1 L592.9 250.0 L536.6 256.2 L535.2 252.6 Z M535.2 252.6 L592.4 246.4 M405.0 231.0 L495.7 218.6 L497.4 234.5 L409.8 245.1 L406.3 242.5 Z M406.3 242.5 L494.8 231.5 M494.5 218.9 L494.8 231.5 M394.8 254.0 L484.7 245.1 L485.9 259.3 L399.2 267.8 L394.4 264.6 Z M394.4 264.6 L483.3 256.6 M482.8 245.4 L483.3 256.6 M385.0 277.9 L549.7 264.5 L551.2 280.4 L390.4 290.4 L383.7 287.7 Z M383.7 287.7 L548.3 277.8 M374.5 301.0 L462.4 296.7 L463.3 310.2 L376.0 313.2 L373.6 312.3 Z M373.6 312.3 L460.6 309.4 M460.2 297.0 L460.6 309.4 M363.9 323.1 L452.5 321.9 L452.6 334.7 L364.5 335.6 L363.0 335.0 Z M363.0 335.0 L448.4 334.3 M448.2 322.2 L448.4 334.3 M353.8 346.3 L439.3 346.0 L440.0 358.5 L355.0 359.2 L354.2 358.5 Z M354.2 358.5 L436.7 358.0 M436.4 346.3 L436.7 358.0" stroke="#f01212" stroke-width="10.5" fill="#f01212"/></g></svg>
<div class="lbl" style="top:320.60px"></div>
<span class="tx" style="left:2.70px;top:322.95px;font-size:10.34px;color:#fff;transform:scaleX(0.8061);">372</span>
<svg class="abs" style="left:0;top:334.20px" width="41.5" height="42" viewBox="0 0 41.5 42"><g transform="translate(-23.96,-8.64) scale(0.1,0.104)" fill="none" stroke-linejoin="round"><path d="M364.2 211.0 L456.3 195.0 L457.3 300.0 L455.6 377.3 L357.6 371.6 L361.3 290.0 L364.2 211.0" stroke="#f4f4f4" stroke-width="15"/><path d="M415.6 207.2 L588.7 179.2 L589.4 197.7 L421.2 222.7 L416.2 217.8 Z M416.2 217.8 L588.3 192.6 M546.9 211.9 L606.0 203.0 L607.0 222.0 L549.4 229.0 L548.0 225.2 Z M548.0 225.2 L606.5 217.2 M533.6 239.3 L591.9 233.1 L592.9 250.0 L536.6 256.2 L535.2 252.6 Z M535.2 252.6 L592.4 246.4 M405.0 231.0 L495.7 218.6 L497.4 234.5 L409.8 245.1 L406.3 242.5 Z M406.3 242.5 L494.8 231.5 M494.5 218.9 L494.8 231.5 M394.8 254.0 L484.7 245.1 L485.9 259.3 L399.2 267.8 L394.4 264.6 Z M394.4 264.6 L483.3 256.6 M482.8 245.4 L483.3 256.6 M385.0 277.9 L549.7 264.5 L551.2 280.4 L390.4 290.4 L383.7 287.7 Z M383.7 287.7 L548.3 277.8 M374.5 301.0 L462.4 296.7 L463.3 310.2 L376.0 313.2 L373.6 312.3 Z M373.6 312.3 L460.6 309.4 M460.2 297.0 L460.6 309.4 M363.9 323.1 L452.5 321.9 L452.6 334.7 L364.5 335.6 L363.0 335.0 Z M363.0 335.0 L448.4 334.3 M448.2 322.2 L448.4 334.3 M353.8 346.3 L439.3 346.0 L440.0 358.5 L355.0 359.2 L354.2 358.5 Z M354.2 358.5 L436.7 358.0 M436.4 346.3 L436.7 358.0" stroke="#f01212" stroke-width="10.5" fill="#f01212"/></g></svg>
<div class="lbl" style="top:376.30px"></div>
<span class="tx" style="left:2.70px;top:378.65px;font-size:10.34px;color:#fff;transform:scaleX(0.8061);">373</span>
<svg class="abs" style="left:0;top:389.90px" width="41.5" height="42" viewBox="0 0 41.5 42"><g transform="translate(-23.96,-8.64) scale(0.1,0.104)" fill="none" stroke-linejoin="round"><path d="M364.2 211.0 L456.3 195.0 L457.3 300.0 L455.6 377.3 L357.6 371.6 L361.3 290.0 L364.2 211.0" stroke="#f4f4f4" stroke-width="15"/><path d="M415.6 207.2 L588.7 179.2 L589.4 197.7 L421.2 222.7 L416.2 217.8 Z M416.2 217.8 L588.3 192.6 M546.9 211.9 L606.0 203.0 L607.0 222.0 L549.4 229.0 L548.0 225.2 Z M548.0 225.2 L606.5 217.2 M533.6 239.3 L591.9 233.1 L592.9 250.0 L536.6 256.2 L535.2 252.6 Z M535.2 252.6 L592.4 246.4 M405.0 231.0 L495.7 218.6 L497.4 234.5 L409.8 245.1 L406.3 242.5 Z M406.3 242.5 L494.8 231.5 M494.5 218.9 L494.8 231.5 M394.8 254.0 L484.7 245.1 L485.9 259.3 L399.2 267.8 L394.4 264.6 Z M394.4 264.6 L483.3 256.6 M482.8 245.4 L483.3 256.6 M385.0 277.9 L549.7 264.5 L551.2 280.4 L390.4 290.4 L383.7 287.7 Z M383.7 287.7 L548.3 277.8 M374.5 301.0 L462.4 296.7 L463.3 310.2 L376.0 313.2 L373.6 312.3 Z M373.6 312.3 L460.6 309.4 M460.2 297.0 L460.6 309.4 M363.9 323.1 L452.5 321.9 L452.6 334.7 L364.5 335.6 L363.0 335.0 Z M363.0 335.0 L448.4 334.3 M448.2 322.2 L448.4 334.3 M353.8 346.3 L439.3 346.0 L440.0 358.5 L355.0 359.2 L354.2 358.5 Z M354.2 358.5 L436.7 358.0 M436.4 346.3 L436.7 358.0" stroke="#f01212" stroke-width="10.5" fill="#f01212"/></g></svg>
<div class="lbl" style="top:432.00px"></div>
<span class="tx" style="left:2.70px;top:434.35px;font-size:10.34px;color:#fff;transform:scaleX(0.8061);">374</span>
</div>
<div class="abs vtrack" style="left:102.5px;top:70.5px;width:13.5px;height:455.5px"></div>
<div class="sbb" style="left:103px;top:71px;width:12.5px;height:13.5px"><svg class="abs" style="left:0;top:0;left:-1px;top:-1px" width="12.5" height="12.5" viewBox="0 0 12.5 12.5"><path d="M3.2 8.2 L6.2 5 L9.2 8.2" fill="none" stroke="#1e2640" stroke-width="1.6" stroke-linejoin="miter"/></svg></div>
<div class="sbb" style="left:103px;top:512.5px;width:12.5px;height:13.5px"><svg class="abs" style="left:0;top:0;left:-1px;top:-1px" width="12.5" height="12.5" viewBox="0 0 12.5 12.5"><path d="M3.2 4.8 L6.2 8 L9.2 4.8" fill="none" stroke="#1e2640" stroke-width="1.6"/></svg></div>
<div class="thumb" style="left:102.9px;top:387px;width:12.4px;height:14.6px"><svg class="abs" style="left:0;top:0;left:-1px;top:0" width="12" height="14" viewBox="0 0 12 14"><path d="M3.5 4.5H8.5M3.5 6.5H8.5M3.5 8.5H8.5" stroke="#8e9cc4" stroke-width="1"/></svg></div>
<div id="canvas"><svg class="abs" style="left:0;top:0" width="658.4" height="441.5" viewBox="119.6 70 658.4 441.5" fill="none">
<path d="M284.5 71.4 V510.0 M229.7 126.2 H668.3 M339.3 71.4 V510.0 M229.7 181.0 H668.3 M394.2 71.4 V510.0 M229.7 235.9 H668.3 M503.8 71.4 V510.0 M229.7 345.5 H668.3 M558.6 71.4 V510.0 M229.7 400.3 H668.3 M613.4 71.4 V510.0 M229.7 455.1 H668.3" stroke="#43467a" stroke-width="1.5"/>
<path d="M449.0 71.4 V510.0 M229.7 290.7 H668.3" stroke="#b9bcc4" stroke-width="1.4"/>
<rect x="229.7" y="71.4" width="438.6" height="438.6" stroke="#b4b4b0" stroke-width="1.4"/>
<path d="M364.2 211.0 L456.3 195.0 L457.3 300.0 L455.6 377.3 L357.6 371.6 L361.3 290.0 L364.2 211.0" stroke="#f2f2f2" stroke-width="1.7" stroke-linejoin="round"/>
<path d="M415.6 207.2 L588.7 179.2 L589.4 197.7 L421.2 222.7 L416.2 217.8 Z M416.2 217.8 L588.3 192.6 M546.9 211.9 L606.0 203.0 L607.0 222.0 L549.4 229.0 L548.0 225.2 Z M548.0 225.2 L606.5 217.2 M533.6 239.3 L591.9 233.1 L592.9 250.0 L536.6 256.2 L535.2 252.6 Z M535.2 252.6 L592.4 246.4 M405.0 231.0 L495.7 218.6 L497.4 234.5 L409.8 245.1 L406.3 242.5 Z M406.3 242.5 L494.8 231.5 M494.5 218.9 L494.8 231.5 M394.8 254.0 L484.7 245.1 L485.9 259.3 L399.2 267.8 L394.4 264.6 Z M394.4 264.6 L483.3 256.6 M482.8 245.4 L483.3 256.6 M385.0 277.9 L549.7 264.5 L551.2 280.4 L390.4 290.4 L383.7 287.7 Z M383.7 287.7 L548.3 277.8 M374.5 301.0 L462.4 296.7 L463.3 310.2 L376.0 313.2 L373.6 312.3 Z M373.6 312.3 L460.6 309.4 M460.2 297.0 L460.6 309.4 M363.9 323.1 L452.5 321.9 L452.6 334.7 L364.5 335.6 L363.0 335.0 Z M363.0 335.0 L448.4 334.3 M448.2 322.2 L448.4 334.3 M353.8 346.3 L439.3 346.0 L440.0 358.5 L355.0 359.2 L354.2 358.5 Z M354.2 358.5 L436.7 358.0 M436.4 346.3 L436.7 358.0" stroke="#ee1010" stroke-width="1.75" stroke-linejoin="round"/>
<circle cx="440.9" cy="347.4" r="3.1" stroke="#f4f4f4" stroke-width="1.3" fill="#500"/>
</svg></div>
<div class="abs vtrack" style="left:778px;top:70.5px;width:16px;height:441px"></div>
<div class="abs htrack" style="left:119.5px;top:511.5px;width:658.5px;height:15.5px"></div>
<div class="abs" style="left:778px;top:511.5px;width:16px;height:15.5px;background:#d3dcf3"></div>
<div class="sbb" style="left:780px;top:71px;width:12.5px;height:13.5px"><svg class="abs" style="left:0;top:0;left:-1px;top:-1px" width="12.5" height="12.5" viewBox="0 0 12.5 12.5"><path d="M3.2 8.2 L6.2 5 L9.2 8.2" fill="none" stroke="#1e2640" stroke-width="1.6" stroke-linejoin="miter"/></svg></div>
<div class="sbb" style="left:780px;top:497.5px;width:12.5px;height:13.5px"><svg class="abs" style="left:0;top:0;left:-1px;top:-1px" width="12.5" height="12.5" viewBox="0 0 12.5 12.5"><path d="M3.2 4.8 L6.2 8 L9.2 4.8" fill="none" stroke="#1e2640" stroke-width="1.6"/></svg></div>
<div class="sbb" style="left:120.5px;top:513px;width:12.5px;height:13.5px"><svg class="abs" style="left:0;top:0;left:-1px;top:-1px" width="12.5" height="12.5" viewBox="0 0 12.5 12.5"><path d="M7.8 3.2 L4.6 6.2 L7.8 9.2" fill="none" stroke="#1e2640" stroke-width="1.6"/></svg></div>
<div class="sbb" style="left:764.5px;top:513px;width:12.5px;height:13.5px"><svg class="abs" style="left:0;top:0;left:-1px;top:-1px" width="12.5" height="12.5" viewBox="0 0 12.5 12.5"><path d="M4.6 3.2 L7.8 6.2 L4.6 9.2" fill="none" stroke="#1e2640" stroke-width="1.6"/></svg></div>
<div class="thumb" style="left:780px;top:302.3px;width:12.5px;height:14.5px"><svg class="abs" style="left:0;top:0;left:-0.5px;top:0" width="12" height="14" viewBox="0 0 12 14"><path d="M3.5 4.5H8.5M3.5 6.5H8.5M3.5 8.5H8.5" stroke="#8e9cc4" stroke-width="1"/></svg></div>
<div class="thumb" style="left:442px;top:512.7px;width:13.5px;height:13.8px;border-bottom:2px solid #8098d0;background:linear-gradient(#f3f5fc,#d5dcf0)"><svg class="abs" style="left:0;top:0;left:-0.5px;top:-1px" width="13" height="13" viewBox="0 0 13 13"><path d="M4.5 4.5V10M6.5 4.5V10M8.5 4.5V10" stroke="#8e9cc4" stroke-width="1"/></svg></div>
<div id="strip"><svg class="abs" style="left:0;top:0" width="732" height="10" viewBox="61 530.5 732 10">
<path d="M61.60 530.5V540.5 M71.00 530.5V540.5 M80.50 530.5V540.5 M90.00 530.5V540.5 M99.50 530.5V540.5 M109.00 530.5V540.5 M114.97 530.5V540.5 M120.95 530.5V540.5 M126.92 530.5V540.5 M132.89 530.5V540.5 M138.86 530.5V540.5 M144.84 530.5V540.5 M150.81 530.5V540.5 M156.78 530.5V540.5 M162.75 530.5V540.5 M168.73 530.5V540.5 M174.70 530.5V540.5 M184.08 530.5V540.5 M193.46 530.5V540.5 M202.84 530.5V540.5 M212.22 530.5V540.5 M221.60 530.5V540.5 M227.60 530.5V540.5 M233.60 530.5V540.5 M243.02 530.5V540.5 M252.44 530.5V540.5 M261.86 530.5V540.5 M271.28 530.5V540.5 M280.70 530.5V540.5 M286.69 530.5V540.5 M292.68 530.5V540.5 M298.67 530.5V540.5 M304.66 530.5V540.5 M310.65 530.5V540.5 M316.64 530.5V540.5 M322.63 530.5V540.5 M328.62 530.5V540.5 M334.61 530.5V540.5 M340.60 530.5V540.5 M350.04 530.5V540.5 M359.48 530.5V540.5 M368.92 530.5V540.5 M378.36 530.5V540.5 M387.80 530.5V540.5 M393.70 530.5V540.5 M399.60 530.5V540.5 M409.04 530.5V540.5 M418.48 530.5V540.5 M427.92 530.5V540.5 M437.36 530.5V540.5 M446.80 530.5V540.5 M452.70 530.5V540.5 M458.60 530.5V540.5 M468.04 530.5V540.5 M477.48 530.5V540.5 M486.92 530.5V540.5 M496.36 530.5V540.5 M505.80 530.5V540.5 M511.76 530.5V540.5 M517.72 530.5V540.5 M523.68 530.5V540.5 M529.64 530.5V540.5 M535.60 530.5V540.5 M541.56 530.5V540.5 M547.52 530.5V540.5 M553.48 530.5V540.5 M559.44 530.5V540.5 M565.40 530.5V540.5 M575.00 530.5V540.5 M584.60 530.5V540.5 M594.20 530.5V540.5 M603.67 530.5V540.5 M613.13 530.5V540.5 M622.60 530.5V540.5 M628.60 530.5V540.5 M634.60 530.5V540.5 M640.60 530.5V540.5 M646.60 530.5V540.5 M652.60 530.5V540.5 M662.04 530.5V540.5 M671.48 530.5V540.5 M680.92 530.5V540.5 M690.36 530.5V540.5 M699.80 530.5V540.5 M705.83 530.5V540.5 M711.87 530.5V540.5 M717.90 530.5V540.5 M727.37 530.5V540.5 M736.83 530.5V540.5 M746.30 530.5V540.5 M755.73 530.5V540.5 M765.17 530.5V540.5 M774.60 530.5V540.5 M780.50 530.5V540.5 M786.40 530.5V540.5" stroke="#8a8470" stroke-width="0.9"/>
<g fill="#5c5e7c"><rect x="71.95" y="531.5" width="7.6" height="7.8"/><rect x="81.45" y="531.5" width="7.6" height="7.8"/><rect x="90.95" y="531.5" width="7.6" height="7.8"/><rect x="100.45" y="531.5" width="7.6" height="7.8"/><rect x="595.13" y="531.5" width="7.6" height="7.8"/><rect x="604.60" y="531.5" width="7.6" height="7.8"/><rect x="614.07" y="531.5" width="7.6" height="7.8"/><rect x="623.90" y="531.5" width="3.4" height="7.8"/><rect x="629.90" y="531.5" width="3.4" height="7.8"/><rect x="635.90" y="531.5" width="3.4" height="7.8"/><rect x="641.90" y="531.5" width="3.4" height="7.8"/><rect x="647.90" y="531.5" width="3.4" height="7.8"/><rect x="653.52" y="531.5" width="7.6" height="7.8"/><rect x="662.96" y="531.5" width="7.6" height="7.8"/><rect x="672.40" y="531.5" width="7.6" height="7.8"/><rect x="681.84" y="531.5" width="7.6" height="7.8"/><rect x="691.28" y="531.5" width="7.6" height="7.8"/><rect x="747.22" y="531.5" width="7.6" height="7.8"/><rect x="756.65" y="531.5" width="7.6" height="7.8"/><rect x="766.08" y="531.5" width="7.6" height="7.8"/><rect x="775.85" y="531.5" width="3.4" height="7.8"/><rect x="781.75" y="531.5" width="3.4" height="7.8"/><rect x="787.65" y="531.5" width="3.4" height="7.8"/></g><g fill="#3463b8"><rect x="62.40" y="531.2" width="7.8" height="8.6"/><rect x="63.70" y="532.6" width="5.2" height="5.6" fill="#4a5a8e"/></g><g fill="#5c5e7c" transform="translate(0,0)"></g>
<g fill="#fb0a0a"><circle cx="111.99" cy="535.35" r="2.25"/><path d="M108.99 535.35L111.99 532.8L114.99 535.35L111.99 537.9Z"/><circle cx="117.96" cy="535.35" r="2.25"/><path d="M114.96 535.35L117.96 532.8L120.96 535.35L117.96 537.9Z"/><circle cx="123.93" cy="535.35" r="2.25"/><path d="M120.93 535.35L123.93 532.8L126.93 535.35L123.93 537.9Z"/><circle cx="129.90" cy="535.35" r="2.25"/><path d="M126.90 535.35L129.90 532.8L132.90 535.35L129.90 537.9Z"/><circle cx="135.88" cy="535.35" r="2.25"/><path d="M132.88 535.35L135.88 532.8L138.88 535.35L135.88 537.9Z"/><circle cx="141.85" cy="535.35" r="2.25"/><path d="M138.85 535.35L141.85 532.8L144.85 535.35L141.85 537.9Z"/><circle cx="147.82" cy="535.35" r="2.25"/><path d="M144.82 535.35L147.82 532.8L150.82 535.35L147.82 537.9Z"/><circle cx="153.80" cy="535.35" r="2.25"/><path d="M150.80 535.35L153.80 532.8L156.80 535.35L153.80 537.9Z"/><circle cx="159.77" cy="535.35" r="2.25"/><path d="M156.77 535.35L159.77 532.8L162.77 535.35L159.77 537.9Z"/><circle cx="165.74" cy="535.35" r="2.25"/><path d="M162.74 535.35L165.74 532.8L168.74 535.35L165.74 537.9Z"/><circle cx="171.71" cy="535.35" r="2.25"/><path d="M168.71 535.35L171.71 532.8L174.71 535.35L171.71 537.9Z"/><circle cx="179.39" cy="535.35" r="3.8"/><circle cx="188.77" cy="535.35" r="3.8"/><circle cx="198.15" cy="535.35" r="3.8"/><circle cx="207.53" cy="535.35" r="3.8"/><circle cx="216.91" cy="535.35" r="3.8"/><circle cx="224.60" cy="535.35" r="2.25"/><path d="M221.60 535.35L224.60 532.8L227.60 535.35L224.60 537.9Z"/><circle cx="230.60" cy="535.35" r="2.25"/><path d="M227.60 535.35L230.60 532.8L233.60 535.35L230.60 537.9Z"/><circle cx="238.31" cy="535.35" r="3.8"/><circle cx="247.73" cy="535.35" r="3.8"/><circle cx="257.15" cy="535.35" r="3.8"/><circle cx="266.57" cy="535.35" r="3.8"/><circle cx="275.99" cy="535.35" r="3.8"/><circle cx="283.69" cy="535.35" r="2.25"/><path d="M280.69 535.35L283.69 532.8L286.69 535.35L283.69 537.9Z"/><circle cx="289.69" cy="535.35" r="2.25"/><path d="M286.69 535.35L289.69 532.8L292.69 535.35L289.69 537.9Z"/><circle cx="295.68" cy="535.35" r="2.25"/><path d="M292.68 535.35L295.68 532.8L298.68 535.35L295.68 537.9Z"/><circle cx="301.67" cy="535.35" r="2.25"/><path d="M298.67 535.35L301.67 532.8L304.67 535.35L301.67 537.9Z"/><circle cx="307.66" cy="535.35" r="2.25"/><path d="M304.66 535.35L307.66 532.8L310.66 535.35L307.66 537.9Z"/><circle cx="313.65" cy="535.35" r="2.25"/><path d="M310.65 535.35L313.65 532.8L316.65 535.35L313.65 537.9Z"/><circle cx="319.64" cy="535.35" r="2.25"/><path d="M316.64 535.35L319.64 532.8L322.64 535.35L319.64 537.9Z"/><circle cx="325.63" cy="535.35" r="2.25"/><path d="M322.63 535.35L325.63 532.8L328.63 535.35L325.63 537.9Z"/><circle cx="331.62" cy="535.35" r="2.25"/><path d="M328.62 535.35L331.62 532.8L334.62 535.35L331.62 537.9Z"/><circle cx="337.61" cy="535.35" r="2.25"/><path d="M334.61 535.35L337.61 532.8L340.61 535.35L337.61 537.9Z"/><circle cx="345.32" cy="535.35" r="3.8"/><circle cx="354.76" cy="535.35" r="3.8"/><circle cx="364.20" cy="535.35" r="3.8"/><circle cx="373.64" cy="535.35" r="3.8"/><circle cx="383.08" cy="535.35" r="3.8"/><circle cx="390.75" cy="535.35" r="2.25"/><path d="M387.75 535.35L390.75 532.8L393.75 535.35L390.75 537.9Z"/><circle cx="396.65" cy="535.35" r="2.25"/><path d="M393.65 535.35L396.65 532.8L399.65 535.35L396.65 537.9Z"/><circle cx="404.32" cy="535.35" r="3.8"/><circle cx="413.76" cy="535.35" r="3.8"/><circle cx="423.20" cy="535.35" r="3.8"/><circle cx="432.64" cy="535.35" r="3.8"/><circle cx="442.08" cy="535.35" r="3.8"/><circle cx="449.75" cy="535.35" r="2.25"/><path d="M446.75 535.35L449.75 532.8L452.75 535.35L449.75 537.9Z"/><circle cx="455.65" cy="535.35" r="2.25"/><path d="M452.65 535.35L455.65 532.8L458.65 535.35L455.65 537.9Z"/><circle cx="463.32" cy="535.35" r="3.8"/><circle cx="472.76" cy="535.35" r="3.8"/><circle cx="482.20" cy="535.35" r="3.8"/><circle cx="491.64" cy="535.35" r="3.8"/><circle cx="501.08" cy="535.35" r="3.8"/><circle cx="508.78" cy="535.35" r="2.25"/><path d="M505.78 535.35L508.78 532.8L511.78 535.35L508.78 537.9Z"/><circle cx="514.74" cy="535.35" r="2.25"/><path d="M511.74 535.35L514.74 532.8L517.74 535.35L514.74 537.9Z"/><circle cx="520.70" cy="535.35" r="2.25"/><path d="M517.70 535.35L520.70 532.8L523.70 535.35L520.70 537.9Z"/><circle cx="526.66" cy="535.35" r="2.25"/><path d="M523.66 535.35L526.66 532.8L529.66 535.35L526.66 537.9Z"/><circle cx="532.62" cy="535.35" r="2.25"/><path d="M529.62 535.35L532.62 532.8L535.62 535.35L532.62 537.9Z"/><circle cx="538.58" cy="535.35" r="2.25"/><path d="M535.58 535.35L538.58 532.8L541.58 535.35L538.58 537.9Z"/><circle cx="544.54" cy="535.35" r="2.25"/><path d="M541.54 535.35L544.54 532.8L547.54 535.35L544.54 537.9Z"/><circle cx="550.50" cy="535.35" r="2.25"/><path d="M547.50 535.35L550.50 532.8L553.50 535.35L550.50 537.9Z"/><circle cx="556.46" cy="535.35" r="2.25"/><path d="M553.46 535.35L556.46 532.8L559.46 535.35L556.46 537.9Z"/><circle cx="562.42" cy="535.35" r="2.25"/><path d="M559.42 535.35L562.42 532.8L565.42 535.35L562.42 537.9Z"/><circle cx="570.20" cy="535.35" r="3.8"/><circle cx="579.80" cy="535.35" r="3.8"/><circle cx="589.40" cy="535.35" r="3.8"/><circle cx="702.82" cy="535.35" r="2.25"/><path d="M699.82 535.35L702.82 532.8L705.82 535.35L702.82 537.9Z"/><circle cx="708.85" cy="535.35" r="2.25"/><path d="M705.85 535.35L708.85 532.8L711.85 535.35L708.85 537.9Z"/><circle cx="714.88" cy="535.35" r="2.25"/><path d="M711.88 535.35L714.88 532.8L717.88 535.35L714.88 537.9Z"/><circle cx="722.63" cy="535.35" r="3.8"/><circle cx="732.10" cy="535.35" r="3.8"/><circle cx="741.57" cy="535.35" r="3.8"/></g>
</svg></div>
<div class="abs" style="left:61px;top:540.5px;width:733px;height:1.5px;background:#aebbdc"></div>
<div id="status"></div>
<div class="abs" style="left:406px;top:543px;width:388px;height:15px;background:#fdfbd9;border:1px solid #d9d4b4;border-left:1px solid #8a8a80"></div>
<div class="abs" style="left:171px;top:544px;width:1.1px;height:13px;background:#8a846e"></div><div class="abs" style="left:172.5px;top:544px;width:1px;height:13px;background:#f6f2e0"></div>
<div class="abs" style="left:283px;top:544px;width:1.1px;height:13px;background:#8a846e"></div><div class="abs" style="left:284.5px;top:544px;width:1px;height:13px;background:#f6f2e0"></div>
<svg class="abs" style="left:61px;top:543px" width="15" height="15" viewBox="0 0 15 15"><circle cx="7.2" cy="7.3" r="5.9" fill="#d2dcf4" stroke="#2e3650" stroke-width="1"/></svg>
<span class="tx" style="left:78.00px;top:544.82px;font-size:9.78px;color:#3a4258;transform:scaleX(0.9245);">3840:-22016:0</span>
<span class="tx" style="left:176.30px;top:544.82px;font-size:9.78px;color:#3a4258;transform:scaleX(0.9118);">1129 frame points</span>
<span class="tx" style="left:409.00px;top:544.82px;font-size:9.78px;color:#2c2c2c;transform:scaleX(0.9201);">Freehand tool. [Ctrl] - Set the Beam</span>
<div class="btn" style="left:660px;width:64.5px"></div><div class="btn" style="left:729px;width:63.5px"></div>
<span class="tx" style="left:686.40px;top:568.31px;font-size:9.92px;color:#4a5268;transform:scaleX(0.8794);">OK</span>
<span class="tx" style="left:747.00px;top:568.31px;font-size:9.92px;color:#4a5268;transform:scaleX(0.9395);">Cancel</span>
<div id="lb"></div><div id="lbw"></div><div id="rb"></div><div id="bb"></div>
<div class="abs" style="left:0;top:0;width:800px;height:2px;background:linear-gradient(#9dbcf0,#7da0e2)"></div>
</div></body></html>
